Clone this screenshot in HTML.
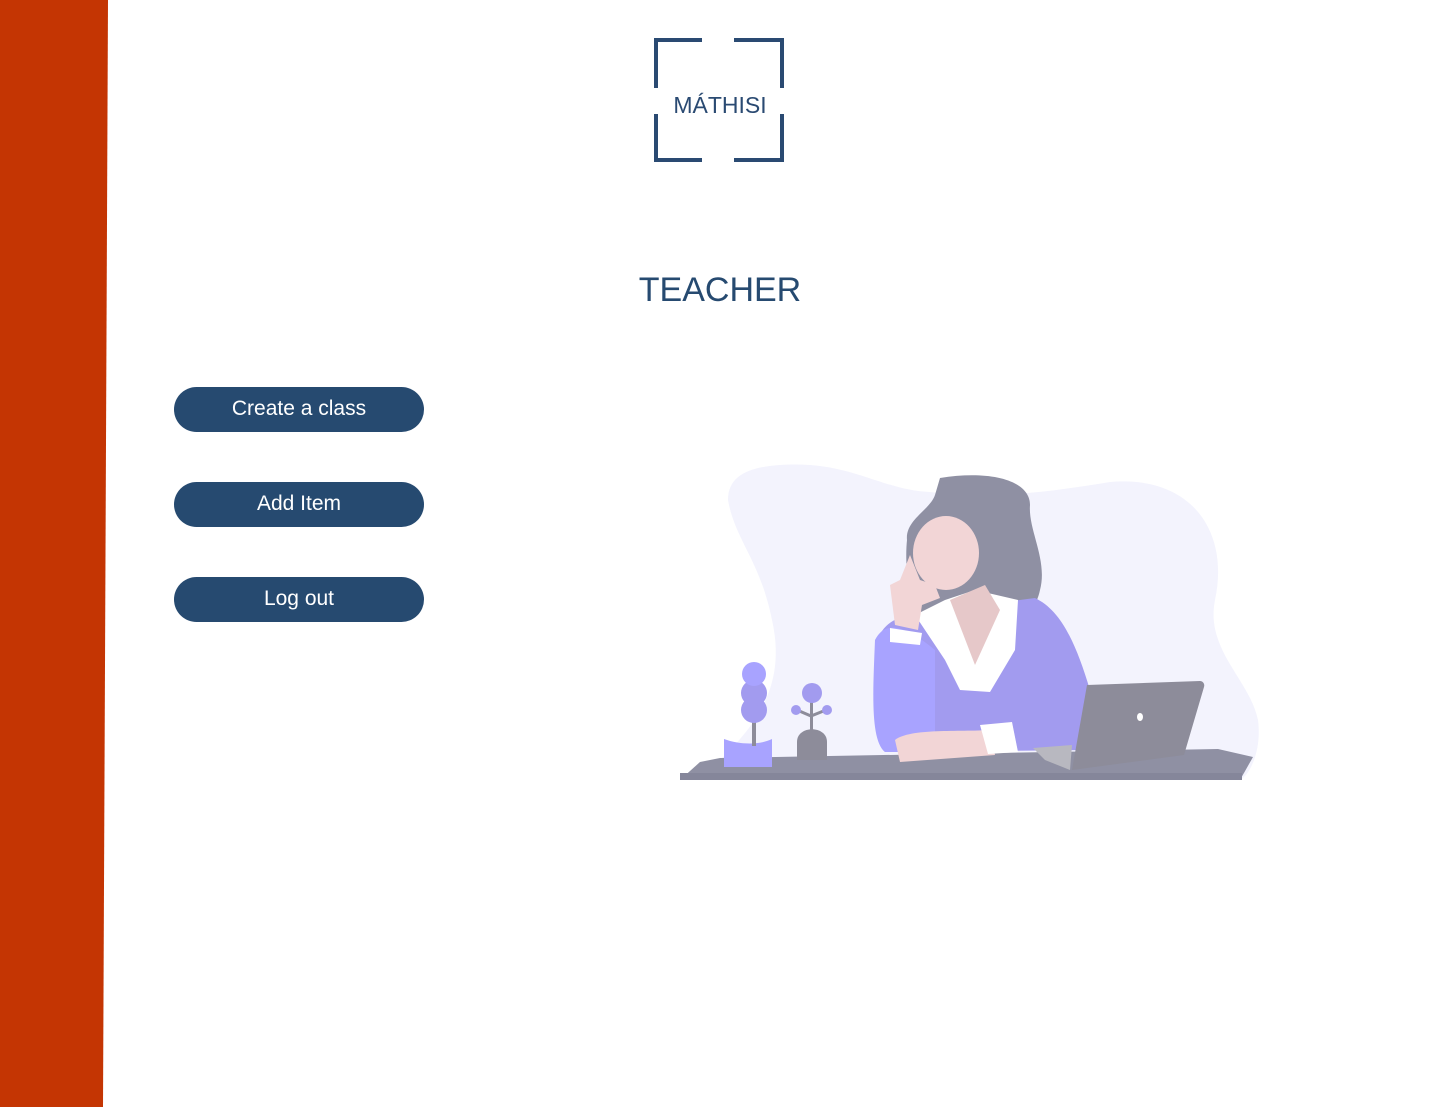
<!DOCTYPE html>
<html><head><meta charset="utf-8"><style>
html,body{margin:0;padding:0;width:1440px;height:1116px;background:#fff;overflow:hidden;font-family:"Liberation Sans",sans-serif;position:relative}
.btn{position:absolute;left:174px;width:250px;height:45px;border-radius:23px;background:#264a70;color:#fff;font-size:21px;line-height:44px;text-align:center}
</style></head><body>
<svg style="position:absolute;left:0;top:0" width="120" height="1116"><polygon points="0,0 108,0 103,1107 0,1107" fill="#c43503"/></svg>
<svg style="position:absolute;top:0;left:640px" width="160" height="180">
<g stroke="#2a4a72" stroke-width="4" fill="none">
<path d="M62,40 H16 V88"/><path d="M94,40 H142 V88"/><path d="M16,114 V160 H62"/><path d="M142,114 V160 H94"/>
</g>
<text x="80" y="113" text-anchor="middle" font-family="Liberation Sans,sans-serif" font-size="23" fill="#2a4a72">MÁTHISI</text>
</svg>
<div style="position:absolute;left:0;width:1440px;top:271px;text-align:center;font-size:34px;color:#264a70">TEACHER</div>
<div class="btn" style="top:387px">Create a class</div>
<div class="btn" style="top:482px">Add Item</div>
<div class="btn" style="top:577px">Log out</div>
<svg style="position:absolute;left:0;top:0" width="1440" height="1116">
<path d="M780,465 C850,460 880,490 930,492 C1000,500 1060,490 1110,482 C1190,475 1230,530 1215,600 C1205,650 1250,680 1258,720 C1262,750 1250,775 1240,780 L700,780 C740,740 790,700 772,620 C760,560 735,540 728,500 C728,475 750,467 780,465 Z" fill="#f3f3fd"/>
<path d="M680,780 L700,762 L720,758 L1218,749 L1253,757 L1240,780 Z" fill="#8f90a3"/>
<rect x="680" y="773" width="562" height="7" fill="#85869a"/>
<path d="M940,478 C990,470 1030,480 1030,505 C1028,530 1048,560 1040,590 C1035,615 1015,625 1000,618 L935,625 C905,610 905,560 907,540 C905,520 930,510 935,495 Z" fill="#8f90a3"/>
<path d="M875,650 C880,620 900,615 930,612 L1035,598 C1060,610 1075,640 1090,690 L1090,750 L885,752 C875,740 875,700 875,650 Z" fill="#a29bef"/>
<path d="M875,640 C885,620 905,625 935,650 L935,752 L885,752 C870,740 873,690 875,640 Z" fill="#a8a3ff"/>
<path d="M915,615 L945,660 L960,690 L990,692 L1015,650 L1018,600 L975,590 L945,600 Z" fill="#fff"/>
<path d="M950,600 L975,665 L1000,610 L985,585 Z" fill="#e6c8c9"/>
<ellipse cx="946" cy="553" rx="33" ry="37" fill="#f2d5d6"/>
<path d="M910,555 L900,580 L890,585 L895,625 L918,630 L922,605 L940,598 L935,585 L920,580 Z" fill="#f2d5d6"/>
<path d="M890,628 L922,633 L920,645 L890,642 Z" fill="#fff"/>
<path d="M895,740 C910,728 960,732 990,730 L995,755 L900,762 Z" fill="#f2d5d6"/>
<path d="M980,725 L1012,722 L1018,752 L988,754 Z" fill="#fff"/>
<path d="M1087,685 L1200,681 C1203,681 1205,684 1204,687 L1184,755 L1072,770 Z" fill="#8d8c9a"/>
<path d="M1033,748 L1072,745 L1070,770 L1045,760 Z" fill="#b8b8c0"/>
<ellipse cx="1140" cy="717" rx="3" ry="4" fill="#fff"/>
<path d="M724,739 C740,745 760,745 772,739 L772,767 L724,767 Z" fill="#a8a3ff"/>
<rect x="752" y="718" width="4" height="28" fill="#8d8c9a"/>
<circle cx="754" cy="710" r="13" fill="#a29bef"/><circle cx="754" cy="693" r="13" fill="#a29bef"/><circle cx="754" cy="674" r="12" fill="#a8a3ff"/>
<path d="M797,742 C797,725 827,725 827,742 L827,760 L797,760 Z" fill="#8d8c9a"/>
<rect x="810" y="695" width="3" height="35" fill="#8d8c9a"/>
<path d="M797,710 L811,716 L826,710" stroke="#8d8c9a" stroke-width="3" fill="none"/>
<circle cx="812" cy="693" r="10" fill="#a29bef"/><circle cx="796" cy="710" r="5" fill="#a29bef"/><circle cx="827" cy="710" r="5" fill="#a29bef"/>
</svg>
</body></html>
